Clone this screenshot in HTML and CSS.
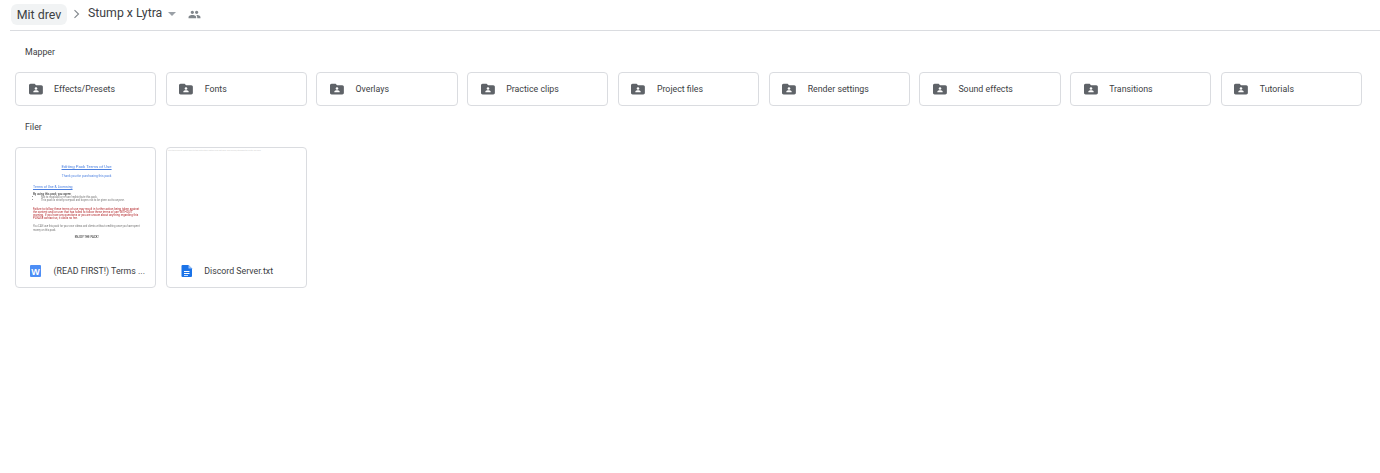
FILE: index.html
```html
<!DOCTYPE html>
<html lang="da">
<head>
<meta charset="utf-8">
<title>Stump x Lytra</title>
<link rel="stylesheet" href="styles.css">
</head>
<body>
<header class="crumbs">
  <span class="crumb-root">Mit drev</span>
  <svg class="chev" viewBox="0 0 10 10" width="10" height="10"><path d="M2.500 1.200 6.500 5 2.500 8.800" fill="none" stroke="#80868b" stroke-width="1.100"/></svg>
  <span class="crumb-current">Stump x Lytra</span>
  <span class="caret"></span>
  <svg class="people" viewBox="0 0 24 24" width="13" height="13"><path fill="#80868b" d="M16 11c1.660 0 2.990-1.340 2.990-3S17.660 5 16 5s-3 1.340-3 3 1.340 3 3 3zm-8 0c1.660 0 2.990-1.340 2.990-3S9.660 5 8 5 5 6.340 5 8s1.340 3 3 3zm0 2c-2.330 0-7 1.170-7 3.500V19h14v-2.500C15 14.170 10.330 13 8 13zm8 0c-.29 0-.62.02-.97.05 1.160.84 1.970 1.970 1.970 3.450V19h6v-2.500c0-2.330-4.670-3.500-7-3.500z"/></svg>
</header>
<main class="content">
  <h2 class="section-title">Mapper</h2>
  <div class="grid folders">
    <div class="folder"><svg class="folder-icon" viewBox="0 0 24 24" width="16" height="16"><use href="#fi"/></svg><span>Effects/Presets</span></div>
    <div class="folder"><svg class="folder-icon" viewBox="0 0 24 24" width="16" height="16"><use href="#fi"/></svg><span>Fonts</span></div>
    <div class="folder"><svg class="folder-icon" viewBox="0 0 24 24" width="16" height="16"><use href="#fi"/></svg><span>Overlays</span></div>
    <div class="folder"><svg class="folder-icon" viewBox="0 0 24 24" width="16" height="16"><use href="#fi"/></svg><span>Practice clips</span></div>
    <div class="folder"><svg class="folder-icon" viewBox="0 0 24 24" width="16" height="16"><use href="#fi"/></svg><span>Project files</span></div>
    <div class="folder"><svg class="folder-icon" viewBox="0 0 24 24" width="16" height="16"><use href="#fi"/></svg><span>Render settings</span></div>
    <div class="folder"><svg class="folder-icon" viewBox="0 0 24 24" width="16" height="16"><use href="#fi"/></svg><span>Sound effects</span></div>
    <div class="folder"><svg class="folder-icon" viewBox="0 0 24 24" width="16" height="16"><use href="#fi"/></svg><span>Transitions</span></div>
    <div class="folder"><svg class="folder-icon" viewBox="0 0 24 24" width="16" height="16"><use href="#fi"/></svg><span>Tutorials</span></div>
  </div>
  <h2 class="section-title files-title">Filer</h2>
  <div class="grid files">
    <div class="file">
      <div class="preview doc">
        <p class="d-title">Editing Pack Terms of Use</p>
        <p class="d-thanks">Thank you for purchasing this pack</p>
        <p class="d-head">Terms of Use &amp; Licensing</p>
        <p class="d-bold">By using this pack, you agree:</p>
        <ul class="d-list">
          <li>Not to reupload or re-use/redistribute this pack.</li>
          <li>This pack is strictly non-paid and buyers not to be given out to anyone.</li>
        </ul>
        <p class="d-red">Failure to follow these terms of use may result in further action being taken against the content and/or user that has failed to follow these terms of use WITHOUT warning. If you have any questions or you are unsure about anything regarding this PLEASE contact us, it costs no fee.</p>
        <p class="d-note">You CAN use this pack for your own videos and clients without crediting once you have spent money on this pack.</p>
        <p class="d-end">ENJOY THE PACK!</p>
      </div>
      <div class="file-foot">
        <svg class="file-icon" viewBox="0 0 16 16" width="16" height="16"><rect x="2" y="2" width="11" height="12" rx="1" fill="#4d8ef5"/><text x="7.500" y="11.500" class="w-mark">W</text></svg>
        <span class="file-name">(READ FIRST!) Terms ...</span>
      </div>
    </div>
    <div class="file">
      <div class="preview txt"><p class="t-line">Join the Discord server here to talk with other editors and get help: discord.gg/stumpxlytra invite link here</p></div>
      <div class="file-foot">
        <svg class="file-icon" viewBox="0 0 16 16" width="16" height="16"><path fill="#1a73e8" d="M3.500 2h6L13 5.500V13a1 1 0 0 1-1 1H3.500a1 1 0 0 1-1-1V3a1 1 0 0 1 1-1z"/><path fill="#9fc3f7" d="M9.500 2 13 5.500H9.500z"/><path fill="#fff" d="M5 8h5.500v1H5zm0 2h5.500v1H5zm0 2h4v.8H5z"/></svg>
        <span class="file-name">Discord Server.txt</span>
      </div>
    </div>
  </div>
</main>
<svg class="defs" width="0" height="0"><defs><g id="fi"><path fill="#5f6368" d="M1.500 6.500C1.500 5.100 2.500 4 3.900 4H10l2 2.200h7.900c1.400 0 2.400 1.100 2.400 2.400V18c0 1.200-1 2.200-2.400 2.200H3.900c-1.400 0-2.400-1-2.400-2.200z"/><circle cx="12" cy="11.300" r="1.900" fill="#fff"/><path fill="#fff" d="M8 17v-1.100c0-1.400 2.700-2 4-2s4 .6 4 2V17z"/></g></defs></svg>
</body>
</html>
```
FILE: styles.css
```css
* { box-sizing: border-box; }
html, body { margin: 0; padding: 0; }
body {
  background: #fff;
  color: #3c4043;
  font-family: Roboto, "Liberation Sans", sans-serif;
  height: 473px;
  overflow: hidden;
}
.crumbs {
  display: flex;
  align-items: center;
  height: 31px;
  margin-left: 10px;
  padding: 0 0 2px 1px;
  border-bottom: 1px solid #dadce0;
}
.crumb-root {
  background: #f1f3f4;
  border-radius: 6px;
  height: 21px;
  width: 56px;
  line-height: 21px;
  text-align: center;
  font-size: 12.400px;
  color: #3c4043;
}
.chev { margin: 0 0 0 5px; }
.crumb-current { margin-left: 6px; font-size: 12.300px; color: #3c4043; position: relative; top: -1px; }
.caret {
  margin-left: 6px;
  width: 0; height: 0;
  border-left: 4px solid transparent;
  border-right: 4px solid transparent;
  border-top: 4px solid #9aa0a6;
}
.people { margin-left: 12px; }
.content { padding: 0 18px 0 15px; }
.section-title {
  margin: 0;
  padding: 14px 0 0 10px;
  height: 41px;
  font-size: 8.800px;
  line-height: 14px;
  font-weight: 400;
  color: #3c4043;
}
.files-title { padding-top: 14.400px; }
.grid {
  display: grid;
  grid-template-columns: repeat(9, 1fr);
  column-gap: 9.600px;
}
.folder {
  display: flex;
  align-items: center;
  gap: 10.500px;
  height: 34px;
  padding-left: 11.500px;
  border: 1px solid #dadce0;
  border-radius: 4px;
  font-size: 8.800px;
  color: #3c4043;
}
.folder-icon { flex: none; }
.file {
  display: flex;
  flex-direction: column;
  height: 141px;
  border: 1px solid #dadce0;
  border-radius: 4px;
  overflow: hidden;
}
.preview { height: 107px; overflow: hidden; }
.preview p, .preview ul { margin: 0; }
.doc {
  padding: 16px 15px 0 17px;
  font-size: 2.900px;
  line-height: 3.200px;
  color: #666;
  filter: blur(.4px);
}
.d-title { text-align: center; color: #4a7fe0; font-size: 4.300px; text-decoration: underline; line-height: 6px; }
.preview .d-thanks { text-align: center; color: #4a7fe0; margin-top: 4px; font-size: 3.200px; line-height: 4px; }
.preview .d-head { color: #4a7fe0; margin-top: 7px; font-size: 3.500px; line-height: 4px; text-decoration: underline; }
.preview .d-bold { margin-top: 4px; color: #444; font-weight: 500; }
.d-list { padding-left: 8px; font-size: 2.700px; color: #777; }
.preview .d-red { margin-top: 5px; color: #b3262a; }
.preview .d-note { margin-top: 5px; font-size: 2.600px; color: #777; }
.preview .d-end { margin-top: 4px; text-align: center; color: #444; font-weight: 500; }
.txt { padding: 1px 1px 0 1px; }
.t-line { font-size: 2px; line-height: 3px; color: #cfcfcf; white-space: nowrap; }
.file-foot {
  display: flex;
  align-items: center;
  gap: 9.500px;
  height: 32px;
  padding-left: 12px;
}
.file-icon { flex: none; }
.file-name { font-size: 8.800px; color: #3c4043; white-space: nowrap; }
.w-mark { fill: #fff; font-family: "Liberation Sans", sans-serif; font-size: 9px; font-weight: 700; text-anchor: middle; }
.defs { display: block; }
```
